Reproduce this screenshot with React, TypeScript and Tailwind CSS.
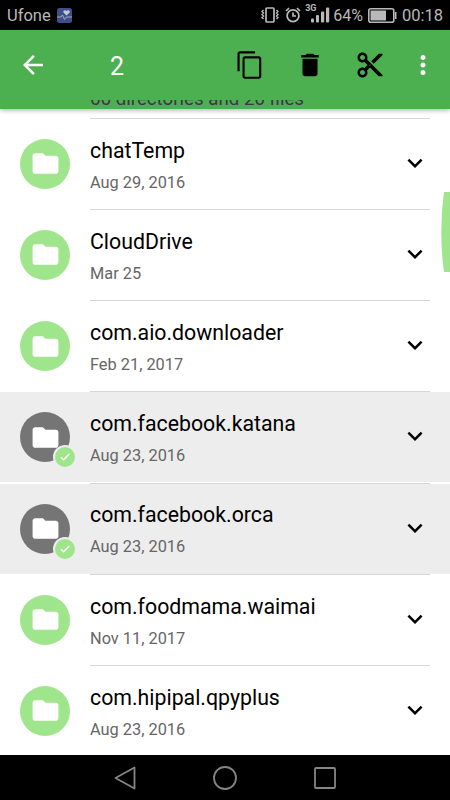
import type { ReactNode } from 'react';
import clsx from 'clsx';

interface Folder {
  name: string;
  date: string;
  selected?: boolean;
}

const folders: Folder[] = [
  { name: 'chatTemp', date: 'Aug 29, 2016' },
  { name: 'CloudDrive', date: 'Mar 25' },
  { name: 'com.aio.downloader', date: 'Feb 21, 2017' },
  { name: 'com.facebook.katana', date: 'Aug 23, 2016', selected: true },
  { name: 'com.facebook.orca', date: 'Aug 23, 2016', selected: true },
  { name: 'com.foodmama.waimai', date: 'Nov 11, 2017' },
  { name: 'com.hipipal.qpyplus', date: 'Aug 23, 2016' },
];

function Icon({ className, children }: { className?: string; children: ReactNode }) {
  return (
    <svg viewBox="0 0 24 24" fill="currentColor" className={clsx('shrink-0', className)}>
      {children}
    </svg>
  );
}

function StatusBar() {
  return (
    <div className="flex h-[30px] shrink-0 items-center bg-black pr-[7px] pl-[7px] text-[#b9b9b9]">
      <span className="pt-[2px] text-[16.5px] leading-none">Ufone</span>
      <svg viewBox="0 0 15 15" className="ml-[6px] size-[15px]">
        <rect width="15" height="15" rx="2.5" fill="#3e5088" />
        <path d="M9.5 7.6 6.7 4.8C5.3 3 8 1 9.5 3c1.6-2 4.3 0 2.9 1.8z" fill="#c6c9d3" />
        <path d="M0 9h4l1.5-2 2 4.5L9.3 9H15" fill="none" stroke="#aab2ca" strokeWidth="0.9" />
      </svg>

      <svg viewBox="0 0 18 16" className="ml-auto h-4 w-[18px]" fill="none" stroke="currentColor">
        <rect x="5" y="1" width="8" height="14" rx="1" strokeWidth="1.7" />
        <path d="M2.5 3 1 4.5 2.5 6 1 7.5 2.5 9 1 10.5 2.5 12M15.5 3 17 4.5 15.5 6 17 7.5 15.5 9 17 10.5 15.5 12" strokeWidth="1.4" />
      </svg>
      <svg viewBox="0 0 16 16" className="ml-[6px] size-4" fill="none" stroke="currentColor">
        <circle cx="8" cy="8.8" r="5.9" strokeWidth="1.8" />
        <path d="M8 5.5V9h3M1 4l3-2.8M15 4l-3-2.800" strokeWidth="1.7" />
      </svg>
      <div className="relative ml-1 h-[18px] w-[25px]">
        <span className="absolute top-[-2px] left-0 text-[9px] leading-none font-bold">3G</span>
        <svg viewBox="0 0 25 18" className="h-[18px] w-[25px]" fill="currentColor">
          <rect x="6" y="12.5" width="3" height="4" rx="1" />
          <rect x="11" y="9" width="3" height="7.5" rx="1" />
          <rect x="16" y="5.5" width="3.2" height="11" rx="1" />
          <rect x="21" y="1.5" width="3.2" height="15" rx="1" />
        </svg>
      </div>
      <span className="ml-[3px] pt-[2px] text-[16px] leading-none">64%</span>
      <svg viewBox="0 0 29 15" className="ml-[5px] h-[15px] w-[29px]" fill="none" stroke="currentColor">
        <rect x="0.8" y="0.8" width="25" height="13.4" rx="2" strokeWidth="1.6" />
        <rect x="2.5" y="2.5" width="15.5" height="10" fill="currentColor" stroke="none" />
        <path d="M27.7 4v7" strokeWidth="1.6" />
      </svg>
      <span className="ml-[5px] pt-[2px] text-[16.5px] leading-none">00:18</span>
    </div>
  );
}

function Toolbar() {
  return (
    <header className="z-10 flex h-[79px] shrink-0 flex-col bg-[#4caf50] shadow-[0_1px_5px_rgba(0,0,0,0.35)]">
      <div className="flex h-[70px] shrink-0 items-center pr-[12.5px] pl-[18px]">
        <Icon className="size-[30px] text-white">
          <path d="M20 11H7.830l5.590-5.590L12 4l-8 8 8 8 1.410-1.410L7.830 13H20v-2z" />
        </Icon>
        <span className="ml-[62px] pt-[2px] text-[25px] leading-none text-white">2</span>
        <div className="ml-auto flex items-center gap-[30px]">
          <Icon className="size-[30px]">
            <path d="M16 1H4c-1.100 0-2 .9-2 2v14h1.700V2.700H16V1zm3 4H8c-1.100 0-2 .9-2 2v14c0 1.100.9 2 2 2h11c1.100 0 2-.9 2-2V7c0-1.100-.9-2-2-2zm.3 16.300H7.700V6.700h11.600v14.600z" />
          </Icon>
          <Icon className="size-[30px]">
            <path d="M6 19c0 1.100.9 2 2 2h8c1.100 0 2-.9 2-2V7H6v12zM19 4h-3.500l-1-1h-5l-1 1H5v2h14V4z" />
          </Icon>
          <Icon className="size-[30px]">
            <path d="M9.640 7.640c.23-.5.360-1.050.360-1.640 0-2.210-1.790-4-4-4S2 3.790 2 6s1.790 4 4 4c.59 0 1.140-.13 1.640-.36L10 12l-2.360 2.360C7.140 14.130 6.590 14 6 14c-2.210 0-4 1.790-4 4s1.790 4 4 4 4-1.790 4-4c0-.59-.13-1.140-.36-1.640L12 14l7 7h3v-1L9.640 7.640zM6 8c-1.100 0-2-.89-2-2s.9-2 2-2 2 .89 2 2-.9 2-2 2zm0 12c-1.100 0-2-.89-2-2s.9-2 2-2 2 .89 2 2-.9 2-2 2zm6-7.500c-.28 0-.5-.22-.5-.5s.22-.5.5-.5.5.22.5.5-.22.5-.5.5zM19 3l-6 6 2 2 7-7V3z" />
          </Icon>
        </div>
        <Icon className="ml-[22.5px] size-[30px] text-white">
          <path d="M12 8c1.100 0 2-.9 2-2s-.9-2-2-2-2 .9-2 2 .9 2 2 2zm0 2c-1.100 0-2 .9-2 2s.9 2 2 2 2-.9 2-2-.9-2-2-2zm0 6c-1.100 0-2 .9-2 2s.9 2 2 2 2-.9 2-2-.9-2-2-2z" />
        </Icon>
      </div>
      {/* summary line scrolled under the bar */}
      <div className="flex h-[9px] items-end overflow-hidden pl-[90px]">
        <span className="text-[18.7px] leading-[19px] whitespace-nowrap text-[#43324b]">66 directories and 20 files</span>
      </div>
    </header>
  );
}

function FolderRow({ name, date, selected }: Folder) {
  return (
    <li className="h-[91.2px] shrink-0">
      <div className="mr-5 ml-[90px] h-px bg-[#d6d6d6]" />
      <div className={clsx('flex h-[90px] items-center pr-5 pl-5', selected && 'bg-[#ededed]')}>
        <div
          className={clsx(
            'relative flex size-[50px] shrink-0 items-center justify-center rounded-full text-white',
            selected ? 'bg-[#757575]' : 'bg-[#9ee58c]',
          )}
        >
          <Icon className="size-[31px]">
            <path d="M10 4H4c-1.100 0-1.990.9-1.990 2L2 18c0 1.100.9 2 2 2h16c1.100 0 2-.9 2-2V8c0-1.100-.9-2-2-2h-8l-2-2z" />
          </Icon>
          {selected && (
            <span className="absolute -right-[7px] -bottom-[7px] flex size-6 items-center justify-center rounded-full border-2 border-[#ededed] bg-[#9ee58c]">
              <Icon className="size-3">
                <path d="M9 15.500 4.830 11.300l-2.100 2.100L9 19.700 21.700 7l-2.100-2.100z" />
              </Icon>
            </span>
          )}
        </div>
        <div className="ml-5 flex flex-1 flex-col gap-[9px] pt-[2.6px]">
          <span className="text-[21.3px] leading-[26px] text-black">{name}</span>
          <span className="text-[16.35px] leading-5 text-[#666]">{date}</span>
        </div>
        <Icon className="mb-[2px] size-[30px]">
          <path d="M7.410 8.590 12 13.170l4.590-4.580L18 10l-6 6-6-6z" />
        </Icon>
      </div>
    </li>
  );
}

function NavBar() {
  return (
    <nav className="z-10 flex h-[45px] shrink-0 items-center justify-center gap-[76px] bg-black">
      <svg viewBox="0 0 24 24" className="size-6" fill="none" stroke="#858585" strokeWidth="1.8" strokeLinejoin="round">
        <path d="M21.5 1.5v21L2.500 12z" />
      </svg>
      <svg viewBox="0 0 24 24" className="size-6" fill="none" stroke="#858585" strokeWidth="1.8">
        <circle cx="12" cy="12" r="11" />
      </svg>
      <svg viewBox="0 0 24 24" className="size-6" fill="none" stroke="#858585" strokeWidth="1.8">
        <rect x="2" y="2" width="20" height="20" rx="1" />
      </svg>
    </nav>
  );
}

export default function App() {
  return (
    <div className="relative flex h-[800px] w-[450px] flex-col overflow-hidden bg-white font-['Roboto',sans-serif] text-black">
      <StatusBar />
      <Toolbar />
      <ul className="flex min-h-0 flex-1 flex-col overflow-hidden pt-[8.8px]">
        {folders.map((folder) => (
          <FolderRow key={folder.name} {...folder} />
        ))}
      </ul>
      <NavBar />
      {/* fast scroll handle */}
      <svg viewBox="0 0 9 80" className="absolute top-48 right-0 h-20 w-[9px]">
        <path d="M9 0H3Q-2.500 40 3 80H9z" fill="#9ee58c" />
      </svg>
    </div>
  );
}
